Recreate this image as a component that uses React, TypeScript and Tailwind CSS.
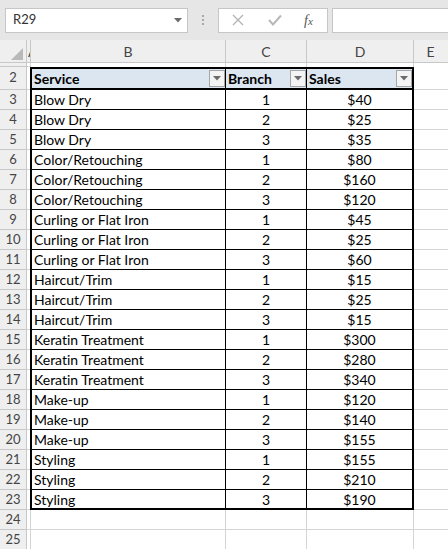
const rows: [string, number, string][] = [
  ["Blow Dry", 1, "$40"],
  ["Blow Dry", 2, "$25"],
  ["Blow Dry", 3, "$35"],
  ["Color/Retouching", 1, "$80"],
  ["Color/Retouching", 2, "$160"],
  ["Color/Retouching", 3, "$120"],
  ["Curling or Flat Iron", 1, "$45"],
  ["Curling or Flat Iron", 2, "$25"],
  ["Curling or Flat Iron", 3, "$60"],
  ["Haircut/Trim", 1, "$15"],
  ["Haircut/Trim", 2, "$25"],
  ["Haircut/Trim", 3, "$15"],
  ["Keratin Treatment", 1, "$300"],
  ["Keratin Treatment", 2, "$280"],
  ["Keratin Treatment", 3, "$340"],
  ["Make-up", 1, "$120"],
  ["Make-up", 2, "$140"],
  ["Make-up", 3, "$155"],
  ["Styling", 1, "$155"],
  ["Styling", 2, "$210"],
  ["Styling", 3, "$190"],
];

function FilterButton() {
  return (
    <div className="flex h-[17px] w-[16px] shrink-0 items-center justify-center border border-[#a6a6a6] bg-[#f4f4f4]">
      <svg width="8" height="5" viewBox="0 0 8 5">
        <path d="M0 0 L8 0 L4 4.5 Z" fill="#6b6b6b" />
      </svg>
    </div>
  );
}

function RowNum({ n, h }: { n: number | string; h: string }) {
  return (
    <div
      className={`flex w-[27px] shrink-0 items-center justify-center border-r border-b border-[#c8c8c8] bg-[#efefef] text-[13px] text-[#444] ${h}`}
    >
      {n}
    </div>
  );
}

export default function App() {
  return (
    <div className="h-[549px] w-[448px] overflow-hidden bg-white font-['Lato','Liberation_Sans',sans-serif] text-black [font-variant-ligatures:none]">
      {/* formula bar */}
      <div className="flex h-[40px] items-center bg-[#e6e6e6] pl-[5px]">
        <div className="flex h-[25px] w-[183px] items-center justify-between border border-[#c6c6c6] bg-white pl-[7px] pr-[5px] text-[13px] text-[#333]">
          <span>R29</span>
          <svg width="8" height="5" viewBox="0 0 8 5">
            <path d="M0 0 L8 0 L4 4.5 Z" fill="#6b6b6b" />
          </svg>
        </div>
        <div className="ml-[14px] flex w-[3px] flex-col gap-[2px]">
          <span className="h-[2px] w-[2px] bg-[#a8a8a8]" />
          <span className="h-[2px] w-[2px] bg-[#a8a8a8]" />
          <span className="h-[2px] w-[2px] bg-[#a8a8a8]" />
        </div>
        <div className="ml-[13px] flex h-[25px] w-[110px] items-center border border-[#c6c6c6] bg-white">
          <svg className="ml-[13px]" width="12" height="12" viewBox="0 0 12 12">
            <path d="M1 1 L11 11 M11 1 L1 11" stroke="#b4b4b4" strokeWidth="1.4" />
          </svg>
          <svg className="ml-[24px]" width="14" height="12" viewBox="0 0 14 12">
            <path d="M1 6 L5 10.5 L13 1.5" stroke="#b8b8b8" strokeWidth="2" fill="none" />
          </svg>
          <span className="ml-[22px] font-['Liberation_Serif',serif] text-[14px] italic text-[#555]">
            f<span className="text-[11px]">x</span>
          </span>
        </div>
        <div className="ml-[4px] h-[25px] flex-1 border border-r-0 border-[#c6c6c6] bg-white" />
      </div>

      {/* column headers */}
      <div className="flex h-[23px] border-b border-[#c8c8c8] bg-[#efefef] text-[14px] text-[#444]">
        <div className="relative w-[27px] shrink-0 border-r border-[#c8c8c8]">
          <svg className="absolute bottom-[2px] right-[3px]" width="12" height="12" viewBox="0 0 12 12">
            <path d="M12 0 L12 12 L0 12 Z" fill="#b9b9b9" />
          </svg>
        </div>
        <div className="w-[4px] shrink-0 overflow-hidden border-r border-[#c8c8c8] pl-[1px] leading-[23px]">A</div>
        <div className="flex w-[195px] shrink-0 items-center justify-center border-r border-[#c8c8c8]">B</div>
        <div className="flex w-[81px] shrink-0 items-center justify-center border-r border-[#c8c8c8]">C</div>
        <div className="flex w-[107px] shrink-0 items-center justify-center border-r border-[#c8c8c8]">D</div>
        <div className="flex flex-1 items-center justify-center pr-[1px]">E</div>
      </div>

      {/* row 1 */}
      <div className="flex h-[4px]">
        <RowNum n="" h="h-[4px]" />
        <div className="w-[4px] shrink-0 border-r border-b border-[#d4d4d4]" />
        <div className="w-[195px] shrink-0 border-r border-[#d4d4d4]" />
        <div className="w-[81px] shrink-0 border-r border-[#d4d4d4]" />
        <div className="w-[107px] shrink-0 border-r border-[#d4d4d4]" />
        <div className="flex-1" />
      </div>

      {/* row 2: table header */}
      <div className="flex h-[23px] text-[14px]">
        <RowNum n={2} h="h-[23px]" />
        <div className="w-[3px] shrink-0 border-b border-[#d4d4d4]" />
        <div className="flex w-[196px] shrink-0 items-center justify-between border-y-2 border-l-2 border-r border-black bg-[#dce6f1] pl-[2px] font-bold">
          <span>Service</span>
          <FilterButton />
        </div>
        <div className="flex w-[81px] shrink-0 items-center justify-between border-y-2 border-r border-black bg-[#dce6f1] pl-[2px] font-bold">
          <span>Branch</span>
          <FilterButton />
        </div>
        <div className="flex w-[107px] shrink-0 items-center justify-between border-y-2 border-r-2 border-black bg-[#dce6f1] pl-[2px] font-bold">
          <span>Sales</span>
          <FilterButton />
        </div>
        <div className="flex-1 border-b border-[#d4d4d4]" />
      </div>

      {/* data rows */}
      {rows.map(([service, branch, sales], i) => {
        const last = i === rows.length - 1;
        const bb = last ? "border-b-2" : "border-b";
        return (
          <div key={i} className="flex h-[20px] text-[14px]">
            <RowNum n={i + 3} h="h-[20px]" />
            <div className="w-[3px] shrink-0 border-b border-[#d4d4d4]" />
            <div className={`flex w-[196px] shrink-0 items-center border-l-2 border-r border-black pl-[2px] ${bb}`}>
              {service}
            </div>
            <div className={`flex w-[81px] shrink-0 items-center justify-center border-r border-black ${bb}`}>
              {branch}
            </div>
            <div className={`flex w-[107px] shrink-0 items-center justify-center border-r-2 border-black ${bb}`}>
              {sales}
            </div>
            <div className="flex-1 border-b border-[#d4d4d4]" />
          </div>
        );
      })}

      {/* empty rows */}
      {[24, 25].map((n) => (
        <div key={n} className="flex h-[20px]">
          <RowNum n={n} h="h-[20px]" />
          <div className="w-[4px] shrink-0 border-r border-b border-[#d4d4d4]" />
          <div className="w-[195px] shrink-0 border-r border-b border-[#d4d4d4]" />
          <div className="w-[81px] shrink-0 border-r border-b border-[#d4d4d4]" />
          <div className="w-[107px] shrink-0 border-r border-b border-[#d4d4d4]" />
          <div className="flex-1 border-b border-[#d4d4d4]" />
        </div>
      ))}
    </div>
  );
}
